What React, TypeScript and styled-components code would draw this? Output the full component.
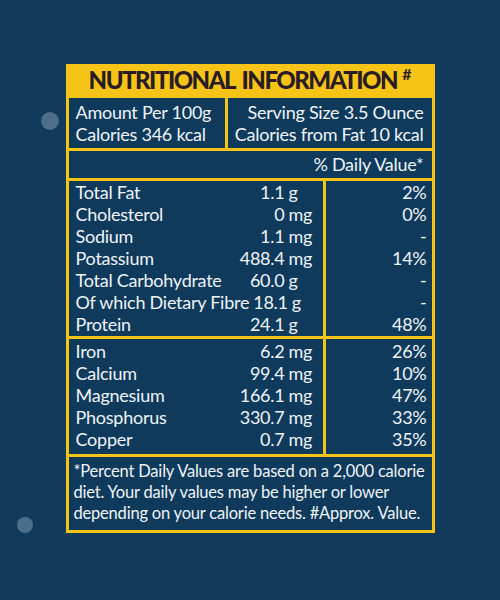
import {FC} from "react";
import styled, {createGlobalStyle} from "styled-components";

interface Row {
    name: string;
    qty: string;
    unit: string;
    dv: string;
}

const nutrients: Row[] = [
    {name: 'Total Fat', qty: '1.1', unit: 'g', dv: '2%'},
    {name: 'Cholesterol', qty: '0', unit: 'mg', dv: '0%'},
    {name: 'Sodium', qty: '1.1', unit: 'mg', dv: '-'},
    {name: 'Potassium', qty: '488.4', unit: 'mg', dv: '14%'},
    {name: 'Total Carbohydrate', qty: '60.0', unit: 'g', dv: '-'},
    {name: 'Of which Dietary Fibre', qty: '18.1', unit: 'g', dv: '-'},
    {name: 'Protein', qty: '24.1', unit: 'g', dv: '48%'},
];

const minerals: Row[] = [
    {name: 'Iron', qty: '6.2', unit: 'mg', dv: '26%'},
    {name: 'Calcium', qty: '99.4', unit: 'mg', dv: '10%'},
    {name: 'Magnesium', qty: '166.1', unit: 'mg', dv: '47%'},
    {name: 'Phosphorus', qty: '330.7', unit: 'mg', dv: '33%'},
    {name: 'Copper', qty: '0.7', unit: 'mg', dv: '35%'},
];

// pad: top and bottom padding of the table, in px
const NutrientTable: FC<{rows: Row[]; pad: [number, number]}> = ({rows, pad}) => (
    <Split $pad={pad}>
        <Amounts>
            {rows.map(r => (
                <AmountRow key={r.name}>
                    <span>{r.name}</span>
                    <Qty>{r.qty}</Qty>
                    <span>{r.unit}</span>
                </AmountRow>
            ))}
        </Amounts>
        <Percents>
            {rows.map(r => <div key={r.name}>{r.dv}</div>)}
        </Percents>
    </Split>
)

export default function App() {
    return (
        <Page>
            <GlobalStyle/>
            <Dot $x={50} $y={121} $size={18}/>
            <Dot $x={25} $y={525} $size={16}/>
            <Panel>
                <Title>NUTRITIONAL INFORMATION<sup>#</sup></Title>
                <TopRow>
                    <Box>
                        <div>Amount Per 100g</div>
                        <div>Calories 346 kcal</div>
                    </Box>
                    <Box $right>
                        <div>Serving Size 3.5 Ounce</div>
                        <div>Calories from Fat 10 kcal</div>
                    </Box>
                </TopRow>
                <Box $right $compact>% Daily Value*</Box>
                <NutrientTable rows={nutrients} pad={[0, 1]}/>
                <NutrientTable rows={minerals} pad={[1, 4]}/>
                <Note>
                    *Percent Daily Values are based on a 2,000 calorie diet. Your daily values may be higher or lower depending on your calorie needs. #Approx. Value.
                </Note>
            </Panel>
        </Page>
    )
}

const GlobalStyle = createGlobalStyle`
  body {
    margin: 0;
    background: #113a5b;
    font-family: Lato, "Noto Sans", sans-serif;
  }
`;

const Page = styled.div`
  position: relative;
  width: 500px;
  height: 600px;
  padding-top: 64px;
  box-sizing: border-box;
  display: flex;
  justify-content: center;
  align-items: flex-start;
  background: #113a5b;
`;

const Dot = styled.div<{$x: number; $y: number; $size: number}>`
  position: absolute;
  left: ${p => p.$x - p.$size / 2}px;
  top: ${p => p.$y - p.$size / 2}px;
  width: ${p => p.$size}px;
  height: ${p => p.$size}px;
  border-radius: 50%;
  background: #4b6e8b;
`;

const Panel = styled.div`
  width: 369px;
  box-sizing: border-box;
  background: #f6c416;
  padding: 0 3px 3px;
  display: flex;
  flex-direction: column;
  gap: 3px;
  color: #eef3f6;
  font-size: 18px;
  line-height: 22px;
  letter-spacing: -0.25px;
`;

const Title = styled.div`
  height: 31px;
  box-sizing: border-box;
  padding-top: 1px;
  display: flex;
  align-items: center;
  justify-content: center;
  color: #2a1c27;
  font-weight: 900;
  font-size: 24px;
  line-height: 28px;
  letter-spacing: -1.5px;
  word-spacing: 3px;
  overflow: hidden;

  sup {
    font-size: 16px;
    font-weight: 700;
    align-self: flex-start;
    margin: 1px 0 0 5px;
    line-height: 16px;
    letter-spacing: 0;
  }
`;

const TopRow = styled.div`
  display: grid;
  grid-template-columns: 156px 1fr;
  gap: 3px;
`;

const Box = styled.div<{$right?: boolean; $compact?: boolean}>`
  background: #0f3a5c;
  padding: ${p => p.$compact ? '2px 8px 3px' : '3px 8px 3px 7px'};
  text-align: ${p => p.$right ? 'right' : 'left'};
  white-space: nowrap;
`;

const Split = styled.div<{$pad: [number, number]}>`
  display: grid;
  grid-template-columns: 254px 1fr;
  gap: 3px;

  & > div {
    padding-top: ${p => p.$pad[0]}px;
    padding-bottom: ${p => p.$pad[1]}px;
  }
`;

const Amounts = styled.div`
  background: #0f3a5c;
  padding-left: 7px;
`;

const AmountRow = styled.div`
  display: grid;
  grid-template-columns: 1fr auto 34px;
  column-gap: 4px;
  white-space: nowrap;
`;

const Qty = styled.span`
  text-align: right;
`;

const Percents = styled.div`
  background: #0f3a5c;
  padding-right: 5px;
  text-align: right;
`;

const Note = styled.div`
  background: #0f3a5c;
  padding: 4px 2px 6px 5px;
  font-size: 16.5px;
  line-height: 21px;
  letter-spacing: -0.2px;
`;
